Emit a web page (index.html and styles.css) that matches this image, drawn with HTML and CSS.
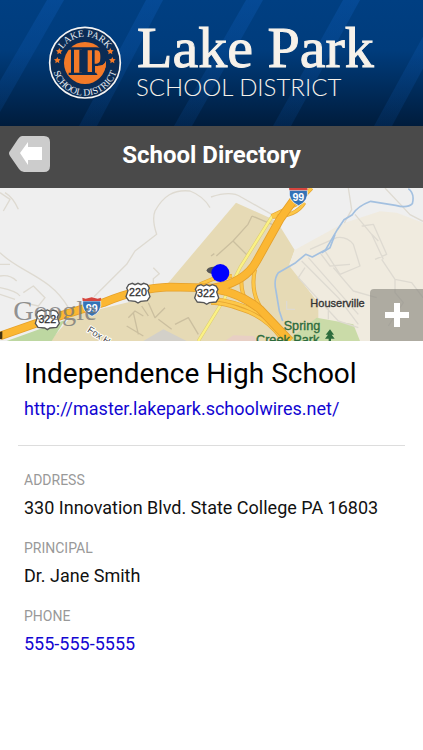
FILE: index.html
```html
<!DOCTYPE html>
<html lang="en">
<head>
<meta charset="utf-8">
<meta name="viewport" content="width=device-width, initial-scale=1">
<title>School Directory</title>
<link rel="stylesheet" href="styles.css">
</head>
<body>
<header class="banner">
  <svg class="banner-art" viewBox="0 0 423 126" role="img" aria-label="Lake Park School District">
    <defs>
      <linearGradient id="sky" x1="0" y1="0" x2="0" y2="1">
        <stop offset="0" stop-color="#003f82"/>
        <stop offset=".4" stop-color="#003c7c"/>
        <stop offset="1" stop-color="#001c3c"/>
      </linearGradient>
      <linearGradient id="beam" x1="0" y1="0" x2="0" y2="1">
        <stop offset="0" stop-color="#0a54a8" stop-opacity=".5"/>
        <stop offset="1" stop-color="#0a4a94" stop-opacity=".2"/>
      </linearGradient>
      <path id="arc-top" d="M56 135a79 79 0 0 1 158 0"/>
      <path id="arc-bottom" d="M37 135a98 98 0 0 0 196 0"/>
    </defs>
    <rect width="423" height="126" fill="url(#sky)"/>
    <g fill="url(#beam)">
      <path d="M47 0h17L-8 126h-18z"/>
      <path d="M146 0h17L97 126H79z"/>
      <path d="M246 0h17l-71 126h-18z"/>
      <path d="M343 0h17l-69 126h-18z"/>
      <path d="M443 0h17l-68 126h-18z"/>
    </g>
    <g transform="translate(40 18) scale(.3333)">
      <circle cx="135" cy="137" r="108" fill="#001a3c" opacity=".5"/>
      <circle cx="135" cy="134" r="106" fill="#0b2c55" stroke="#f4f4f4" stroke-width="5"/>
      <circle cx="135" cy="135" r="63" fill="#f47a28"/>
      <text class="seal-text" text-anchor="middle"><textPath href="#arc-top" startOffset="50%">LAKE PARK</textPath></text>
      <text class="seal-text" text-anchor="middle"><textPath href="#arc-bottom" startOffset="50%">SCHOOL DISTRICT</textPath></text>
      <g fill="#f47a28">
        <path id="star" d="M58 90l3 6 7 1-5 5 1 7-6-4-6 4 1-7-5-5 7-1z"/>
        <use href="#star" x="-6" y="27"/><use href="#star" x="153"/><use href="#star" x="159" y="27"/>
      </g>
      <path d="M86 88h82q30 0 30 27v15q-5 14-24 14h-9v20h9v7H86v-7h7V95h-7z" fill="#0b2c55"/>
      <path d="M102 95h24v69h-24zM143 97h13v65h-13zM164 97h5q12 0 12 16v8q0 16-12 16h-5z" fill="#f47a28"/>
      <path d="M174 143q18 2 24-15l-1 18q-6 20-20 30l-8-10z" fill="#f47a28"/>
      <path d="M118 95h8v69h-8z" fill="#0b2c55"/>
    </g>
    <text class="brand-name" x="137" y="67">Lake Park</text>
    <text class="brand-sub" x="136" y="96">SCHOOL DISTRICT</text>
  </svg>
</header>

<nav class="titlebar">
  <button class="back" type="button" aria-label="Back">
    <svg viewBox="0 0 41 36" width="41" height="36"><path d="M13 0h22q6 0 6 6v24q0 6-6 6H15q-3 0-5-3L1 20q-2-3 0-5L9 3q2-3 4-3z" fill="#ccc"/><path d="M11 17L19 6v5h14v13H19v5z" fill="#fff"/></svg>
  </button>
  <h1 class="title">School Directory</h1>
</nav>

<section class="map" aria-label="Map">
  <svg class="map-art" viewBox="0 6 1269 459">
    <rect y="6" width="1269" height="459" fill="#efefef"/>
    <path d="M150 465L215 390 400 345 505 290 636 135 708 50 830 105 884 192 868 235 955 350 990 465z" fill="#e6dab5"/>
    <path d="M884 192L1030 112 1140 76 1190 80 1269 110V465H955V350L868 240z" fill="#f0ebdf"/>
    <path d="M20 465L195 402 155 465z" fill="#bdd7a1"/>
    <path d="M860 465L950 395 1060 415 1080 465z" fill="#cadba8"/>
    <path d="M675 465l25-17 60 2 15 15z" fill="#e8cfc4"/>
    <path d="M430 465l60-35 70 35z" fill="#d3d0c9"/>
    <g class="lane">
      <path d="M0 200C60 260 150 270 205 365M282 332L380 235 405 195 470 145Q455 100 465 75C490 30 520 10 570 15Q610 30 630 65M0 20L30 40 10 75M15 20Q40 35 55 70M0 235l30 0M0 270q30-5 50 15M0 305q50 10 60 25M70 320l30-20 35 35-20 25-45-10M0 325l45 15M460 245l18 18-18 15v15"/>
      <path d="M633 33q60-20 90 0L815 85M1045 6l10 65-22 40M1065 85l50 60 35 75M1085 120l35-5 40 90-35 15M930 190l80-35q30-5 50 20l20 65-60 25-45-70M960 200l30 40 60-5M905 225l110 110 60 80M925 215l150 170M915 245l-20 30 120 130 60 20M1000 245l60 70 70 20M1115 145l20 20M1145 220l40 60 0 40 25 30-45 70M1185 280l50 10 34 45M860 345l0 25 25 0M985 365l0 35M1155 6l75 80 39 20"/>
    </g>
    <g class="lane-dark"><path d="M756 90l-12 25-45 50-50 45M699 165l45 45M756 90l60 25M633 210l10-7M385 395l20-20 25 15M400 380l15 65M425 360l20 30M445 350l20 45 30-30M380 420l50 30M475 400l40 30M525 415l40-20 30 50"/></g>
    <path class="river" d="M1225 8q20 15 12 45-15 15-50 5l-75-12q-40 15-55 40l-25 15-20 30-35 60-40 22-20-8-30 25-52 30q-15 20-7 55l10 60 10 30"/>
    <path class="river" d="M1005 145l-15 40-25 15"/>
    <path class="yellow-edge" d="M595 465L672 340 720 245 820 85"/>
    <path class="yellow" d="M595 465L672 340 720 245 820 85"/>
    <path class="ramp-edge" d="M815 90L888 55 935 6M818 92q70 0 95-42M725 275q-5 45 20 80M765 250q-20 85 45 150l35 40M600 295l36-15 60-10M633 338q100 10 170 60l50 60M633 350q40 0 90 20 70 20 120 85"/>
    <path class="ramp" d="M815 90L888 55 935 6M818 92q70 0 95-42M725 275q-5 45 20 80M765 250q-20 85 45 150l35 40M600 295l36-15 60-10M633 338q100 10 170 60l50 60M633 350q40 0 90 20 70 20 120 85"/>
    <path class="highway-edge" d="M0 450L120 408 310 350Q420 305 510 303L640 306Q735 290 770 225L840 100 890 30M640 308Q720 320 780 370L870 465"/>
    <path class="highway" d="M0 450L120 408 310 350Q420 305 510 303L640 306Q735 290 770 225L840 100 890 30M640 308Q720 320 780 370L870 465"/>
    <path d="M0 438v22l7-2v-22z" fill="#443412"/>
    <text class="map-street" transform="translate(260 436) rotate(33)">Fox H</text>
    <g id="us-shield" transform="translate(378 290)">
      <path d="M8 6l11-4 8 4 9-4 9 4 8-4 11 4 6 10-4 8 6 18-8 12-20 2-8 5-8-5-20-2-8-12 6-18-4-8z" fill="#fff" stroke="#555" stroke-width="4"/>
    </g>
    <use href="#us-shield" x="206" y="4"/>
    <use href="#us-shield" x="-272" y="80"/>
    <text class="map-route" x="414" y="331">220</text>
    <text class="map-route" x="618" y="334">322</text>
    <text class="map-route" x="142" y="411">322</text>
    <g id="interstate">
      <path d="M248 345q-4 32 28 46 31-14 26-46z" fill="#3473b7" stroke="#fff" stroke-width="2"/>
      <path d="M248 345l-1-10 10 3 18-4 18 4 10-3-1 10z" fill="#d5453e"/>
    </g>
    <use href="#interstate" x="620" y="-332"/>
    <text class="map-interstate" x="275" y="377">99</text>
    <text class="map-interstate" x="895" y="45">99</text>
    <text class="map-logo" x="40" y="402">Google</text>
    <text class="map-place" x="931" y="364">Houserville</text>
    <text class="map-park" x="851" y="432">Spring</text>
    <text class="map-park" x="768" y="475">Creek Park</text>
    <path d="M990 430l12 16h-7l9 12h-11v7h-7v-7h-11l9-12h-7z" fill="#2d6b3c"/>
    <ellipse cx="642" cy="253" rx="22" ry="11" fill="#555"/>
    <circle cx="661" cy="261" r="27" fill="#0000fe"/>
  </svg>
  <button class="expand" type="button" aria-label="Expand map">
    <svg viewBox="0 0 24 24" width="24" height="24"><path d="M9 0h6v9h9v6h-9v9H9v-9H0V9h9z" fill="#fff"/></svg>
  </button>
</section>

<main class="details">
  <div class="school">
    <h2 class="school-name">Independence High School</h2>
    <a class="value" href="http://master.lakepark.schoolwires.net/">http://master.lakepark.schoolwires.net/</a>
  </div>
  <dl class="facts">
    <div><dt class="label">ADDRESS</dt><dd class="value">330 Innovation Blvd. State College PA 16803</dd></div>
    <div><dt class="label">PRINCIPAL</dt><dd class="value">Dr. Jane Smith</dd></div>
    <div><dt class="label">PHONE</dt><dd class="value"><a href="tel:555-555-5555">555-555-5555</a></dd></div>
  </dl>
</main>
</body>
</html>
```
FILE: styles.css
```css
* { box-sizing: border-box; }
body { margin: 0; background: #fff; color: #111; font-family: Roboto, "Liberation Sans", sans-serif; }
h1, h2, dl, dd { margin: 0; }
button { padding: 0; border: 0; background: none; cursor: pointer; }
a { color: #1206d2; text-decoration: none; }
svg { display: block; }

.banner-art, .map-art { width: 100%; height: auto; }
.brand-name { font: 58px "Liberation Serif", serif; fill: #f7f2ea; stroke: #f7f2ea; stroke-width: 1px; }
.brand-sub { font: 300 24px Lato, sans-serif; fill: #f7f2ea; }
.seal-text { font: 29px "Liberation Serif", serif; fill: #e8edf3; }

.titlebar { display: grid; grid-template-columns: 1fr auto 1fr; align-items: center; min-height: 62px; padding: 0 9px; background: #4a4a4a; }
.back { justify-self: start; margin-bottom: 6px; }
.title { margin-bottom: 4px; color: #fff; font-size: 24px; line-height: 32px; font-weight: 700; }

.map { position: relative; overflow: hidden; }
.expand { position: absolute; right: 0; bottom: 0; display: grid; place-items: center; width: 53px; height: 52px; border-radius: 4px 0 0 0; background: rgba(130, 128, 120, .6); }
.lane, .lane-dark, .river, .yellow, .yellow-edge, .ramp, .ramp-edge, .highway, .highway-edge { fill: none; stroke-linejoin: round; }
.lane { stroke: #dedad1; stroke-width: 4; }
.lane-dark { stroke: #cbbf9f; stroke-width: 4; }
.river { stroke: #a3c0e0; stroke-width: 5; }
.yellow-edge { stroke: #dbcb70; stroke-width: 10; }
.yellow { stroke: #fbf184; stroke-width: 7; }
.ramp-edge { stroke: #e5a532; stroke-width: 12; }
.ramp { stroke: #fdc748; stroke-width: 8; }
.highway-edge { stroke: #e5a02a; stroke-width: 26; }
.highway { stroke: #fbb733; stroke-width: 21; }
.map-logo { font: 85px "Liberation Serif", serif; fill: #777; fill-opacity: .8; }
.map-street, .map-place, .map-park, .map-route, .map-interstate { font-family: "Liberation Sans", sans-serif; }
.map-street { font-size: 28px; fill: #444; stroke: #fff; stroke-width: 6px; paint-order: stroke; }
.map-route, .map-interstate { text-anchor: middle; font-size: 32px; }
.map-route { fill: #333; stroke: #333; stroke-width: 1px; }
.map-interstate { font-weight: 700; fill: #fff; }
.map-place { font-size: 33px; fill: #333; stroke: #333; stroke-width: 1px; }
.map-park { font-size: 38px; fill: #2d6b3c; stroke: #2d6b3c; stroke-width: 1px; }

.details { padding: 12px 18px; }
.school { padding: 0 6px 22px; border-bottom: 1px solid #ddd; }
.school-name { color: #000; font-size: 28px; line-height: 42px; font-weight: 400; }
.value { font-size: 18px; line-height: 28px; }
.facts { display: grid; gap: 12px; padding: 20px 6px; }
.label { color: #999; font-size: 14px; line-height: 28px; }
```
